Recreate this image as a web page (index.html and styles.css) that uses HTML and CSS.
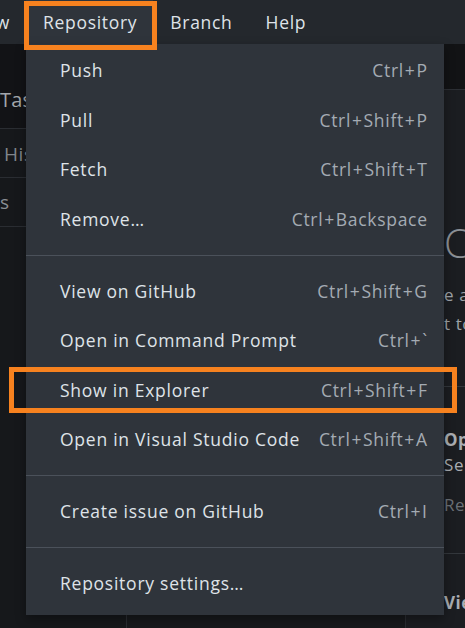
FILE: index.html
```html
<!DOCTYPE html>
<html lang="en">
<head>
<meta charset="utf-8">
<title>Repository menu</title>
<link rel="stylesheet" href="styles.css">
</head>
<body>
<div class="app">
  <header class="menubar">
    <div class="mb-clip"><span class="mi">View</span></div>
    <span class="mi mi-active">Repository</span>
    <span class="mi">Branch</span>
    <span class="mi">Help</span>
  </header>

  <div class="workspace">
    <aside class="sidebar">
      <div class="sb-top"><span class="sb-repo">TaskList</span></div>
      <div class="sb-tab"><span class="sb-tab-text">History</span></div>
      <div class="sb-row"><span class="sb-row-text">s</span></div>
      <div class="sb-rest"></div>
    </aside>
    <section class="middle"></section>
    <main class="main">
      <div class="main-top"></div>
      <div class="main-body">
        <h1 class="mb-title">Clean</h1>
        <p class="mb-text mb-t1">e are no uncommitted changes</p>
        <p class="mb-text">t to do next.</p>
        <div class="suggest">
          <p class="sg-head">Open the repository</p>
          <p class="sg-line">Select Open in Visual Studio Code</p>
          <p class="sg-dim">Repository menu</p>
        </div>
        <div class="suggest2">
          <p class="sg-head">View on GitHub</p>
        </div>
      </div>
    </main>
  </div>

  <nav class="dropdown">
    <div class="dd-item"><span>Push</span><span class="kbd">Ctrl<span class="plus">+</span>P</span></div>
    <div class="dd-item"><span>Pull</span><span class="kbd">Ctrl<span class="plus">+</span>Shift<span class="plus">+</span>P</span></div>
    <div class="dd-item"><span>Fetch</span><span class="kbd">Ctrl<span class="plus">+</span>Shift<span class="plus">+</span>T</span></div>
    <div class="dd-item"><span>Remove…</span><span class="kbd">Ctrl<span class="plus">+</span>Backspace</span></div>
    <div class="dd-sep"></div>
    <div class="dd-item"><span>View on GitHub</span><span class="kbd">Ctrl<span class="plus">+</span>Shift<span class="plus">+</span>G</span></div>
    <div class="dd-item"><span>Open in Command Prompt</span><span class="kbd">Ctrl<span class="plus">+</span>`</span></div>
    <div class="dd-item"><span>Show in Explorer</span><span class="kbd">Ctrl<span class="plus">+</span>Shift<span class="plus">+</span>F</span></div>
    <div class="dd-item"><span>Open in Visual Studio Code</span><span class="kbd">Ctrl<span class="plus">+</span>Shift<span class="plus">+</span>A</span></div>
    <div class="dd-sep"></div>
    <div class="dd-item"><span>Create issue on GitHub</span><span class="kbd">Ctrl<span class="plus">+</span>I</span></div>
    <div class="dd-sep"></div>
    <div class="dd-item"><span>Repository settings…</span></div>
  </nav>

  <div class="mark mark-menu"></div>
  <div class="mark mark-item"></div>
</div>
</body>
</html>
```

FILE: styles.css
```css
* { box-sizing: border-box; margin: 0; padding: 0; }

html, body {
  width: 465px;
  height: 628px;
  overflow: hidden;
  background: #141518;
}

body {
  font-family: "Open Sans", "Noto Sans", "Liberation Sans", sans-serif;
  font-size: 17px;
  color: #dfe3e8;
}

.app {
  position: relative;
  width: 465px;
  height: 628px;
  display: flex;
  flex-direction: column;
  overflow: hidden;
}

/* ---------- menubar ---------- */
.menubar {
  height: 44px;
  flex: none;
  background: #24282d;
  display: flex;
  align-items: stretch;
}

.mb-clip {
  width: 26px;
  flex: none;
  display: flex;
  justify-content: flex-end;
  overflow: hidden;
}

.mi {
  flex: none;
  display: flex;
  align-items: center;
  padding: 0 16px 0 17px;
  font-size: 17.5px;
  letter-spacing: 0.7px;
  color: #dfe3e8;
  white-space: nowrap;
}

.mi-active {
  background: #2f343b;
}

/* ---------- background workspace ---------- */
.workspace {
  flex: 1;
  display: flex;
  min-height: 0;
}

.sidebar {
  width: 127px;
  flex: none;
  display: flex;
  flex-direction: column;
  border-right: 1px solid #2a2d32;
  background: #16181b;
  white-space: nowrap;
  overflow: hidden;
}

.sb-top {
  height: 85px;
  flex: none;
  padding: 42px 0 0 0;
  border-bottom: 1px solid #2a2d32;
  background: #121316;
}

.sb-repo {
  font-size: 20px;
  letter-spacing: 0.2px;
  color: #a3a7ac;
}

.sb-tab {
  height: 49px;
  flex: none;
  padding: 12px 0 0 4px;
  border-bottom: 1px solid #2a2d32;
}

.sb-tab-text {
  font-size: 19px;
  letter-spacing: 0.6px;
  color: #80858b;
}

.sb-row {
  height: 49px;
  flex: none;
  padding: 11px 0 0 0;
  border-bottom: 1px solid #2a2d32;
}

.sb-row-text {
  font-size: 19px;
  color: #8a8f94;
}

.sb-rest { flex: 1; }

.middle {
  width: 279px;
  flex: none;
  border-right: 1px solid #2a2d32;
  background: #17191c;
}

.main {
  flex: 1;
  display: flex;
  flex-direction: column;
  background: #1b1d21;
  white-space: nowrap;
  overflow: hidden;
}

.main-top {
  height: 46px;
  flex: none;
  background: #121315;
  border-bottom: 1px solid #2c2f34;
}

.main-body {
  flex: 1;
  min-height: 0;
  overflow: hidden;
  padding: 0 0 0 38px;
}

.mb-title {
  margin-top: 131px;
  font-size: 40px;
  font-weight: 300;
  line-height: 44px;
  color: #8c9096;
}

.mb-text {
  font-size: 17px;
  line-height: 29px;
  letter-spacing: 0.6px;
  color: #9ea3a9;
}

.mb-t1 { margin-top: 15px; }

.suggest {
  margin-top: 48px;
  height: 168px;
  padding-top: 40px;
  border-top: 1px solid #33373c;
  border-bottom: 1px solid #33373c;
}

.sg-head {
  font-size: 17px;
  font-weight: 700;
  line-height: 26px;
  letter-spacing: 0.5px;
  color: #a9adb2;
}

.sg-line {
  font-size: 17px;
  line-height: 24px;
  letter-spacing: 0.6px;
  color: #a9adb2;
}

.sg-dim {
  margin-top: 16px;
  font-size: 17px;
  letter-spacing: 0.6px;
  color: #6b7076;
}

.suggest2 {
  padding-top: 36px;
}

/* ---------- dropdown ---------- */
.dropdown {
  position: absolute;
  left: 26px;
  top: 44px;
  width: 418px;
  height: 571px;
  background: #2f343b;
  padding: 2px 0 0 0;
  display: flex;
  flex-direction: column;
  box-shadow: 0 4px 10px rgba(0, 0, 0, 0.35);
}

.dd-item {
  height: 49.6px;
  flex: none;
  display: flex;
  align-items: center;
  justify-content: space-between;
  padding: 0 17px 1px 34px;
  font-size: 17.5px;
  letter-spacing: 0.75px;
  color: #dfe3e8;
  white-space: nowrap;
}

.kbd {
  color: #a4abb3;
  letter-spacing: 0.7px;
  margin-right: -0.7px;
}

.plus {
  margin: 0 0.9px;
}

.dd-sep {
  flex: none;
  height: 1px;
  margin: 10.5px 0;
  background: #4b515a;
}

/* ---------- annotation marks ---------- */
.mark {
  position: absolute;
  border: 5px solid #f7821f;
  pointer-events: none;
}

.mark-menu {
  left: 24px;
  top: 1px;
  width: 133px;
  height: 49px;
}

.mark-item {
  left: 9px;
  top: 367px;
  width: 448px;
  height: 46px;
}
```
